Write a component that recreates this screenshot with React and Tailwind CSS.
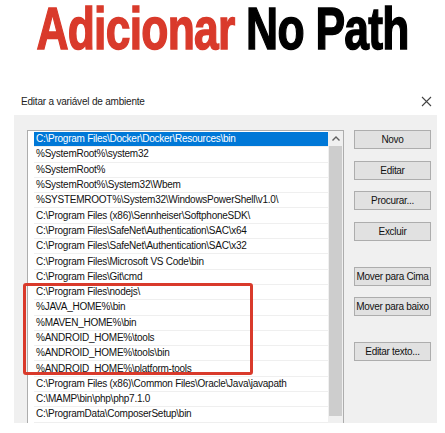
import React from 'react';

const paths = [
  'C:\\Program Files\\Docker\\Docker\\Resources\\bin',
  '%SystemRoot%\\system32',
  '%SystemRoot%',
  '%SystemRoot%\\System32\\Wbem',
  '%SYSTEMROOT%\\System32\\WindowsPowerShell\\v1.0\\',
  'C:\\Program Files (x86)\\Sennheiser\\SoftphoneSDK\\',
  'C:\\Program Files\\SafeNet\\Authentication\\SAC\\x64',
  'C:\\Program Files\\SafeNet\\Authentication\\SAC\\x32',
  'C:\\Program Files\\Microsoft VS Code\\bin',
  'C:\\Program Files\\Git\\cmd',
  'C:\\Program Files\\nodejs\\',
  '%JAVA_HOME%\\bin',
  '%MAVEN_HOME%\\bin',
  '%ANDROID_HOME%\\tools',
  '%ANDROID_HOME%\\tools\\bin',
  '%ANDROID_HOME%\\platform-tools',
  'C:\\Program Files (x86)\\Common Files\\Oracle\\Java\\javapath',
  'C:\\MAMP\\bin\\php\\php7.1.0',
  'C:\\ProgramData\\ComposerSetup\\bin',
];

const WinButton = ({ children, className = '' }) => (
  <button
    className={`w-[77px] h-[19px] bg-[#e1e1e1] border border-[#adadad] text-[10px] text-[#111] leading-none whitespace-nowrap tracking-[-0.3px] ${className}`}
  >
    {children}
  </button>
);

export default function App() {
  return (
    <div className="w-[445px] h-[433px] bg-white overflow-hidden relative font-['Liberation_Sans',sans-serif]">
      {/* Headline */}
      <div className="h-[60px] flex justify-center">
        <h1 className="inline-block whitespace-nowrap text-[60px] leading-[58px] font-bold tracking-[-1px] scale-x-[0.74] origin-center font-['Liberation_Sans',sans-serif]">
          <span className="text-[#d93a2b] [-webkit-text-stroke:1.5px_#d93a2b]">Adicionar</span>{' '}
          <span className="text-black [-webkit-text-stroke:1.5px_#000]">No Path</span>
        </h1>
      </div>

      {/* Dialog header */}
      <div className="mt-[30px] flex items-center justify-between pl-[21px] pr-[13px] h-[22px]">
        <span className="text-[10px] tracking-[-0.2px] text-[#222]">Editar a variável de ambiente</span>
        <svg width="11" height="11" viewBox="0 0 11 11" className="text-[#444]">
          <path d="M1 1L10 10M10 1L1 10" stroke="currentColor" strokeWidth="1.1" />
        </svg>
      </div>

      {/* Dialog body */}
      <div className="ml-[14px] w-[423px] h-[308px] mt-[3px] bg-[#f0f0f0] flex gap-[10px] pl-[13px] pt-[15px] overflow-hidden">
        <div className="relative w-[317px] h-[300px] bg-white border border-[#adadad] border-b-0 flex">
          <div className="flex-1 min-w-0 overflow-hidden pl-[6px] pt-[1px]">
            {paths.map((p, i) => (
              <div
                key={i}
                className={`h-[15.3px] flex items-center pl-[2px] text-[10px] tracking-[-0.25px] leading-none whitespace-nowrap border-b border-[#efefef] ${
                  i === 0 ? 'bg-[#0078d7] text-white border-[#0078d7]' : 'text-[#111]'
                }`}
              >
                {p}
              </div>
            ))}
          </div>
          {/* Scrollbar */}
          <div className="w-[15px] shrink-0 bg-[#f0f0f0] flex flex-col items-center">
            <div className="h-[15px] flex items-center justify-center">
              <svg width="8" height="5" viewBox="0 0 8 5">
                <path d="M0.5 4.5L4 1L7.5 4.5" stroke="#606060" strokeWidth="1.4" fill="none" />
              </svg>
            </div>
            <div className="w-[13px] h-[270px] bg-[#cdcdcd]" />
          </div>
        </div>

        {/* Buttons */}
        <div className="flex flex-col">
          <WinButton>Novo</WinButton>
          <WinButton className="mt-[12px]">Editar</WinButton>
          <WinButton className="mt-[11px]">Procurar...</WinButton>
          <WinButton className="mt-[12px]">Excluir</WinButton>
          <WinButton className="mt-[26px]">Mover para Cima</WinButton>
          <WinButton className="mt-[11px]">Mover para baixo</WinButton>
          <WinButton className="mt-[26px]">Editar texto...</WinButton>
        </div>
      </div>

      {/* Highlight rectangle */}
      <div className="absolute left-[23px] top-[283px] w-[230px] h-[92px] border-[3px] border-[#d93a2b] rounded-[3px]" />
    </div>
  );
}
